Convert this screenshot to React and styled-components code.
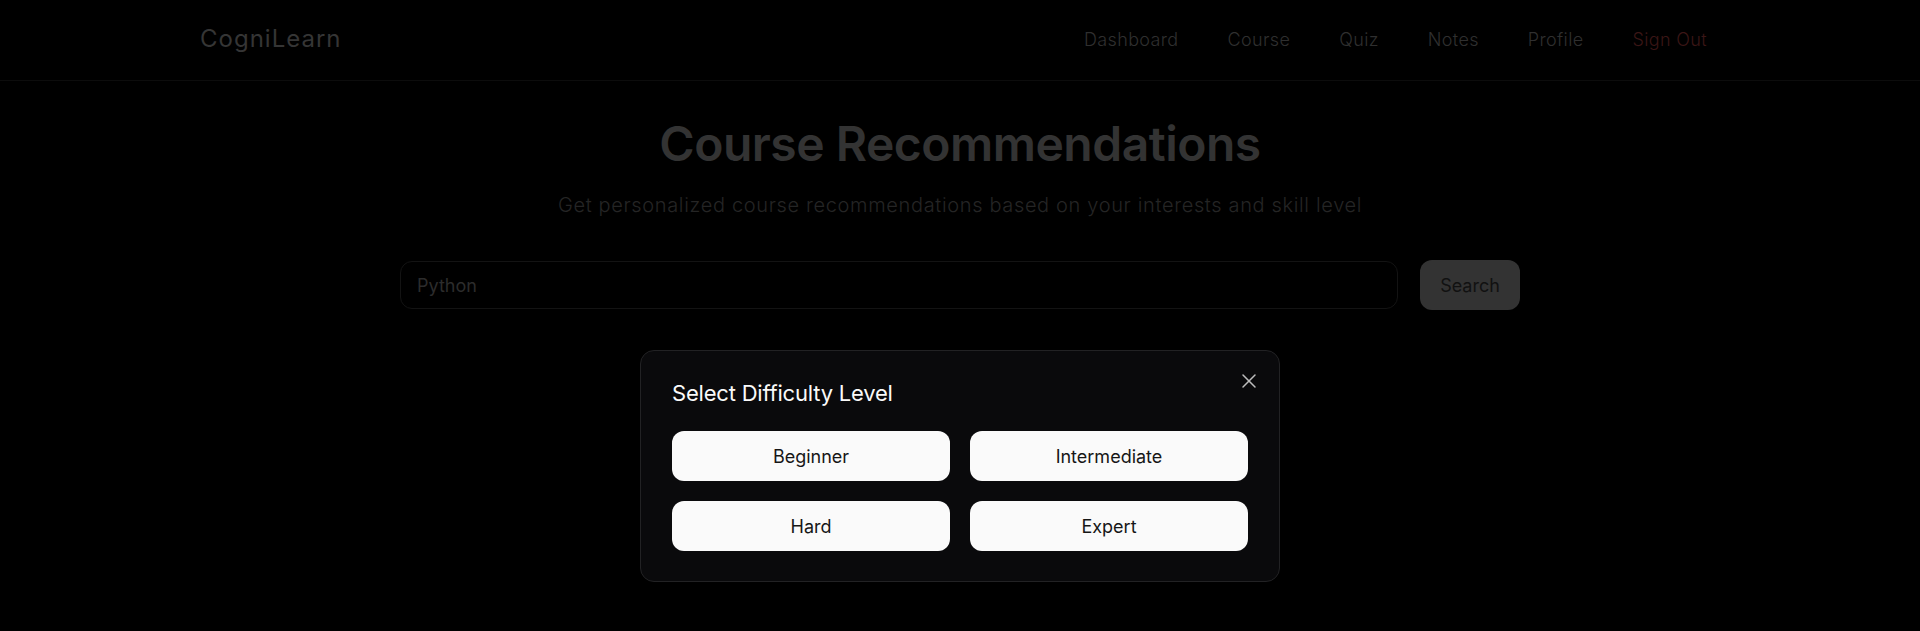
import React from "react";
import styled, { createGlobalStyle } from "styled-components";

const GlobalStyle = createGlobalStyle`
  html, body {
    margin: 0;
    padding: 0;
    background: #000;
  }
  body {
    font-family: Inter, "Open Sans", "Liberation Sans", sans-serif;
    color: #333;
  }
  * { box-sizing: border-box; }
`;

const Page = styled.div`
  min-height: 631px;
  background: #000;
  display: flex;
  flex-direction: column;
`;

const Header = styled.header`
  height: 81px;
  border-bottom: 1px solid #0c0c0c;
  display: flex;
  align-items: center;
  justify-content: space-between;
  padding: 0 213px 2px 200px;
`;

const Logo = styled.div`
  font-size: 24px;
  font-weight: 400;
  color: #353535;
  letter-spacing: 1px;
  padding-bottom: 1px;
`;

const Nav = styled.nav`
  display: flex;
  align-items: center;
  gap: 49px;
`;

const NavLink = styled.a`
  font-size: 18px;
  font-weight: 300;
  letter-spacing: 0.35px;
  color: ${(p) => (p.$danger ? "#3b1616" : "#2f2f2f")};
  text-decoration: none;
  cursor: pointer;
`;

const Main = styled.main`
  display: flex;
  flex-direction: column;
  align-items: center;
  padding-top: 39px;
`;

const Title = styled.h1`
  margin: 0;
  font-size: 48px;
  line-height: 48px;
  font-weight: 600;
  color: #333;
  letter-spacing: -0.5px;
`;

const Subtitle = styled.p`
  margin: 23px 0 0;
  font-size: 20px;
  line-height: 28px;
  font-weight: 300;
  letter-spacing: 0.65px;
  color: #252525;
`;

const SearchRow = styled.div`
  margin-top: 41px;
  width: 1120px;
  display: flex;
  align-items: center;
  gap: 22px;
`;

const Input = styled.input`
  flex: 1;
  height: 48px;
  background: #000;
  border: 1px solid #131313;
  border-radius: 12px;
  padding: 0 16px;
  font-family: inherit;
  font-size: 18px;
  color: #2c2c2c;
  outline: none;
  &::placeholder { color: #2c2c2c; }
`;

const SearchButton = styled.button`
  width: 100px;
  height: 50px;
  border: none;
  border-radius: 12px;
  background: #333;
  color: #111;
  font-family: inherit;
  font-size: 18px;
  font-weight: 400;
  cursor: pointer;
`;

const Dialog = styled.div`
  position: relative;
  margin-top: 40px;
  width: 640px;
  background: #0a0a0c;
  border: 1px solid #222224;
  border-radius: 14px;
  padding: 26px 31px 30px;
`;

const DialogTitle = styled.h2`
  margin: 0 0 22px;
  font-size: 22px;
  line-height: 32px;
  font-weight: 400;
  color: #fafafa;
  letter-spacing: -0.2px;
`;

const CloseButton = styled.button`
  position: absolute;
  top: 18px;
  right: 18px;
  width: 24px;
  height: 24px;
  padding: 0;
  border: none;
  background: transparent;
  color: #bdbdbd;
  display: flex;
  align-items: center;
  justify-content: center;
  cursor: pointer;
`;

const Options = styled.div`
  display: grid;
  grid-template-columns: 1fr 1fr;
  gap: 20px;
`;

const Option = styled.button`
  height: 50px;
  border: none;
  border-radius: 12px;
  background: #fafafa;
  color: #161616;
  font-family: inherit;
  font-size: 18px;
  font-weight: 400;
  cursor: pointer;
`;

const navItems = ["Dashboard", "Course", "Quiz", "Notes", "Profile"];
const levels = ["Beginner", "Intermediate", "Hard", "Expert"];

export default function App() {
  return (
    <>
      <GlobalStyle />
      <Page>
        <Header>
          <Logo>CogniLearn</Logo>
          <Nav>
            {navItems.map((n) => (
              <NavLink key={n}>{n}</NavLink>
            ))}
            <NavLink $danger>Sign Out</NavLink>
          </Nav>
        </Header>
        <Main>
          <Title>Course Recommendations</Title>
          <Subtitle>
            Get personalized course recommendations based on your interests and skill level
          </Subtitle>
          <SearchRow>
            <Input defaultValue="Python" />
            <SearchButton>Search</SearchButton>
          </SearchRow>
          <Dialog>
            <DialogTitle>Select Difficulty Level</DialogTitle>
            <CloseButton aria-label="Close">
              <svg width="24" height="24" viewBox="0 0 24 24" fill="none" stroke="currentColor" strokeWidth="1.5" strokeLinecap="round">
                <path d="M18 6 6 18" />
                <path d="m6 6 12 12" />
              </svg>
            </CloseButton>
            <Options>
              {levels.map((l) => (
                <Option key={l}>{l}</Option>
              ))}
            </Options>
          </Dialog>
        </Main>
      </Page>
    </>
  );
}
